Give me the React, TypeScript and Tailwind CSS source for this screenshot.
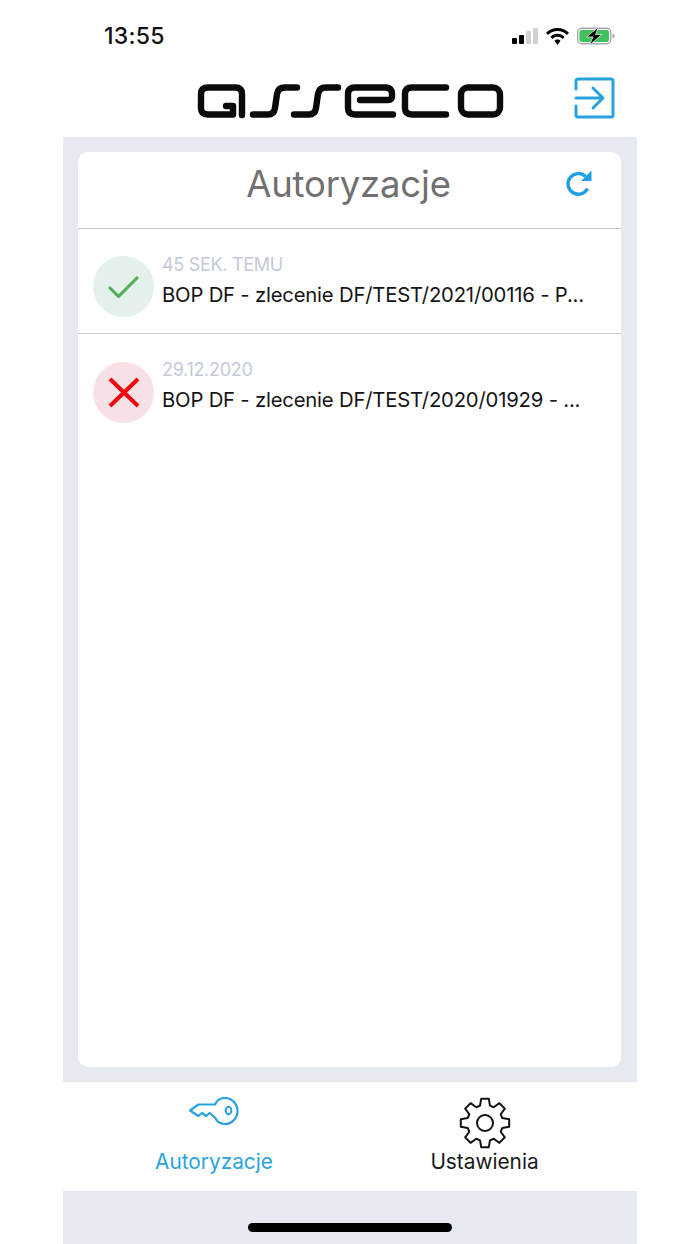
const font = "font-['Inter','Liberation_Sans',sans-serif]";

// 8 tooth gear outline, top tooth first
const gearPath = Array.from({ length: 8 })
  .map((_, i) => {
    const a = (i * Math.PI) / 4 - Math.PI / 2;
    const pt = (r: number, d: number) => {
      const t = a + (d * Math.PI) / 180;
      return `${(26 + r * Math.cos(t)).toFixed(2)} ${(26 + r * Math.sin(t)).toFixed(2)}`;
    };
    return `${i === 0 ? 'M' : 'L'}${pt(18, -16)}L${pt(24.5, -9)}L${pt(24.5, 9)}L${pt(18, 16)}`;
  })
  .join('') + 'Z';

function Logo() {
  return (
    <svg width="320" height="60" viewBox="0 0 320 60" fill="none" stroke="#0a0a0a" strokeWidth="6.4" strokeLinecap="round" strokeLinejoin="round">
      <path d="M52 45V24Q52 17.5 45 17.5H18Q11 17.5 11 24V38Q11 44.5 18 44.5H43V36H36" />
      <path d="M107 17.5H95Q88 17.5 87 24L85 38Q84 44.5 78 44.5H63" />
      <path d="M148 17.5H136Q129 17.5 128 24L126 38Q125 44.5 119 44.5H104" />
      <path d="M170 30H198Q202 30 202 26V24Q202 17.5 195 17.5H165Q158 17.5 158 24V38Q158 44.5 165 44.5H203" />
      <path d="M256 17.5H222Q215 17.5 215 24V38Q215 44.5 222 44.5H256" />
      <rect x="271" y="17.5" width="39" height="27" rx="7" />
    </svg>
  );
}

function ExitIcon() {
  return (
    <svg width="42" height="43" viewBox="0 0 42 43" fill="none" stroke="#29a3e0" strokeWidth="3" strokeLinecap="round" strokeLinejoin="round">
      <path d="M3 13V5Q3 3 5 3H38Q40 3 40 5V39Q40 41 38 41H5Q3 41 3 39V30" />
      <path d="M3 22H29M20 12L30 22L20 32" />
    </svg>
  );
}

function RefreshIcon() {
  return (
    <svg width="29" height="29" viewBox="0 0 29 29" fill="none">
      <path d="M21.5 7.5A10.3 10.3 0 1 0 23.5 19.5" stroke="#1d9fe0" strokeWidth="3.4" />
      <path d="M27.5 1.5V12H17Z" fill="#1d9fe0" />
    </svg>
  );
}

function KeyIcon() {
  return (
    <svg width="50" height="30" viewBox="0 0 50 30" fill="none" stroke="#29a3e0" strokeWidth="2.2" strokeLinejoin="round">
      <path d="M1 13.5L9.4 7.5H26C28 3 32 1 36 1C43 1 48.5 7 48.5 14C48.5 21 43 27 36 27C32 27 28 25 26 20.5L20.6 16L17 19L13 16L9.4 19Z" />
      <ellipse cx="39.5" cy="13.5" rx="2.8" ry="3.8" strokeWidth="2" />
    </svg>
  );
}

function GearIcon() {
  return (
    <svg width="52" height="52" viewBox="0 0 52 52" fill="none" stroke="#111" strokeWidth="2" strokeLinejoin="round">
      <path d={gearPath} />
      <circle cx="26" cy="26" r="8" />
    </svg>
  );
}

function StatusIcons() {
  return (
    <div className="flex items-center gap-[8px]">
      <div className="flex items-end gap-[2px] h-[16px]">
        <div className="w-[5px] h-[6px] rounded-[1px] bg-black" />
        <div className="w-[5px] h-[9px] rounded-[1px] bg-black" />
        <div className="w-[5px] h-[13px] rounded-[1px] bg-[#d0d0d0]" />
        <div className="w-[5px] h-[16px] rounded-[1px] bg-[#d0d0d0]" />
      </div>
      <svg width="23" height="17" viewBox="0 0 23 17">
        <path d="M11.5 0C7 0 3.2 1.8 0 4.8L2 7C4.6 4.5 7.9 3 11.5 3S18.4 4.5 21 7L23 4.8C19.8 1.8 16 0 11.5 0Z" fill="#000" />
        <path d="M11.5 5.8C8.8 5.8 6.4 6.9 4.4 8.8L6.4 11C7.8 9.6 9.5 8.8 11.5 8.8S15.2 9.6 16.6 11L18.6 8.8C16.6 6.9 14.2 5.8 11.5 5.8Z" fill="#000" />
        <path d="M11.5 11.5C10.3 11.5 9.3 12 8.5 12.8L11.5 17L14.5 12.8C13.7 12 12.7 11.5 11.5 11.5Z" fill="#000" />
      </svg>
      <svg width="38" height="18" viewBox="0 0 38 18">
        <rect x="0.7" y="1.2" width="33" height="15.6" rx="4" fill="none" stroke="#a8a8a8" strokeWidth="1.4" />
        <rect x="2.5" y="3" width="29.5" height="12" rx="2.2" fill="#3fc15d" />
        <path d="M35.5 6.5V11.5C37 11 37.7 10 37.7 9S37 7 35.5 6.5Z" fill="#a8a8a8" />
        <path d="M21.5 0L9.5 10H16L12.5 18L25 7.5H18.5Z" fill="#000" stroke="#fff" strokeWidth="0.7" />
      </svg>
    </div>
  );
}

const rows = [
  { date: '45 SEK. TEMU', text: 'BOP DF - zlecenie DF/TEST/2021/00116 - P...', ok: true },
  { date: '29.12.2020', text: 'BOP DF - zlecenie DF/TEST/2020/01929 - ...', ok: false },
];

function Row({ date, text, ok }: { date: string; text: string; ok: boolean }) {
  return (
    <div className="h-[105px] flex items-center pl-[15px] pr-[30px] gap-[8px] border-b border-[#c9c9cb] last:border-b-0">
      <div className={`w-[61px] h-[61px] mt-[11px] shrink-0 rounded-full flex items-center justify-center ${ok ? 'bg-[#e4f0ec]' : 'bg-[#f7e1e4]'}`}>
        {ok ? (
          <svg width="31" height="22" viewBox="0 0 31 22" fill="none" stroke="#4caf50" strokeWidth="3">
            <path d="M1 11L10.5 20.5L30 1" />
          </svg>
        ) : (
          <svg width="32" height="31" viewBox="0 0 32 31" fill="none" stroke="#f5040c" strokeWidth="4">
            <path d="M2 2L30 29M30 2L2 29" />
          </svg>
        )}
      </div>
      <div className="min-w-0 flex-1 flex flex-col gap-[4px] pt-[1px] pb-[2px]">
        <div className="text-[18px] leading-[24px] tracking-[-0.3px] text-[#c5c9d8]">{date}</div>
        <div className="text-[20.3px] leading-[28px] tracking-[-0.2px] text-[#141414] whitespace-nowrap">{text}</div>
      </div>
    </div>
  );
}

export default function App() {
  return (
    <div className={`w-[700px] h-[1244px] bg-white px-[63px] flex flex-col ${font}`}>
      <div className="h-[62px] shrink-0 flex items-start justify-between pl-[41px] pr-[22px] pt-[22px]">
        <span className="text-[23px] leading-[28px] font-medium text-[#111] tracking-[0.3px]">13:55</span>
        <div className="pt-[5px]"><StatusIcons /></div>
      </div>

      <div className="h-[75px] shrink-0 grid grid-cols-[1fr_auto_1fr] items-start">
        <div />
        <div className="pt-[8px]"><Logo /></div>
        <div className="justify-self-end pr-[22px] pt-[14px]"><ExitIcon /></div>
      </div>

      <div className="flex-1 bg-[#e6e9ef] pl-[15px] pr-[16px] py-[15px] flex flex-col">
        <div className="flex-1 bg-white rounded-[10px] flex flex-col">
          <div className="h-[77px] shrink-0 grid grid-cols-[1fr_auto_1fr] items-center border-b border-[#c9c9cb]">
            <div />
            <h1 className="text-[36.5px] leading-[44px] tracking-[-0.2px] text-[#707070] pr-[2px] pb-[12px]">Autoryzacje</h1>
            <div className="justify-self-end pr-[28px] pb-[14px]"><RefreshIcon /></div>
          </div>
          {rows.map((r) => (
            <Row key={r.date} {...r} />
          ))}
        </div>
      </div>

      <div className="h-[109px] shrink-0 grid grid-cols-2">
        <div className="flex flex-col items-center pt-[15px] pl-[15px]">
          <div className="h-[52px]"><KeyIcon /></div>
          <span className="text-[20.8px] leading-[26px] text-[#29a3e0]">Autoryzacje</span>
        </div>
        <div className="flex flex-col items-center pt-[15px] pr-[18px]">
          <div className="h-[52px]"><GearIcon /></div>
          <span className="text-[20.8px] leading-[26px] text-[#1a1a1a]">Ustawienia</span>
        </div>
      </div>

      <div className="h-[53px] shrink-0 bg-[#e6e9ef] flex justify-center pt-[32px]">
        <div className="w-[204px] h-[9px] rounded-full bg-black" />
      </div>
    </div>
  );
}
